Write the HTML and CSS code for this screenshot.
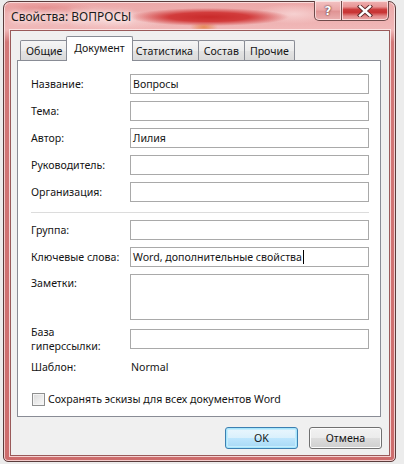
FILE: index.html
```html
<!DOCTYPE html>
<html lang="ru">
<head>
<meta charset="utf-8">
<title>Свойства: ВОПРОСЫ</title>
<link rel="stylesheet" href="styles.css">
</head>
<body>
<div class="desk">
  <div class="window">
    <div class="titlebar">
      <span class="title">Свойства: ВОПРОСЫ</span>
      <div class="caption-btns">
        <div class="cbtn help">?</div>
        <div class="cbtn close">
          <svg width="16" height="12" viewBox="0 0 16 12"><path d="M3 1.5 L13 10.5 M13 1.5 L3 10.5" stroke="#5a2a2a" stroke-width="4.2" stroke-linecap="square"/><path d="M3 1.5 L13 10.5 M13 1.5 L3 10.5" stroke="#ffffff" stroke-width="2.4" stroke-linecap="square"/></svg>
        </div>
      </div>
    </div>
    <div class="client">
      <div class="tabs">
        <div class="tab">Общие</div>
        <div class="tab active">Документ</div>
        <div class="tab">Статистика</div>
        <div class="tab">Состав</div>
        <div class="tab">Прочие</div>
      </div>
      <div class="panel">
        <div class="row"><span class="lbl">Название:</span><div class="input">Вопросы</div></div>
        <div class="row"><span class="lbl">Тема:</span><div class="input"></div></div>
        <div class="row"><span class="lbl">Автор:</span><div class="input">Лилия</div></div>
        <div class="row"><span class="lbl">Руководитель:</span><div class="input"></div></div>
        <div class="row"><span class="lbl">Организация:</span><div class="input"></div></div>
        <div class="sep"></div>
        <div class="row first"><span class="lbl">Группа:</span><div class="input"></div></div>
        <div class="row"><span class="lbl">Ключевые слова:</span><div class="input">Word, дополнительные свойства<span class="caret"></span></div></div>
        <div class="row top"><span class="lbl">Заметки:</span><div class="input area"></div></div>
        <div class="row base"><span class="lbl two">База<br>гиперссылки:</span><div class="input"></div></div>
        <div class="row plain"><span class="lbl">Шаблон:</span><span class="val">Normal</span></div>
        <div class="check"><span class="box"></span><span>Сохранять эскизы для всех документов Word</span></div>
      </div>
      <div class="buttons">
        <div class="btn default">OK</div>
        <div class="btn">Отмена</div>
      </div>
    </div>
  </div>
</div>
</body>
</html>
```
FILE: styles.css
```css
html, body {
  margin: 0;
  padding: 0;
}
body {
  width: 404px;
  height: 464px;
  overflow: hidden;
  background: #ececec;
  font-family: "Noto Sans", "Open Sans", sans-serif;
  font-size: 10.6px;
  color: #151515;
}
.desk {
  padding: 1px 0 0 3px;
}
.window {
  width: 393px;
  height: 461px;
  border: 1px solid #5a3c3c;
  border-radius: 7px 7px 5px 5px;
  box-shadow: inset 0 0 0 1px rgba(255, 235, 235, 0.75);
  background:
    radial-gradient(ellipse 80px 9px at 205px 15px, #c92a2a 0%, #d23c3c 50%, rgba(220, 80, 80, 0) 100%),
    radial-gradient(ellipse 14px 5px at 200px 25px, #e68a55 0%, rgba(230, 140, 90, 0) 100%),
    radial-gradient(ellipse 60px 10px at 110px 18px, #f7d4d4 0%, rgba(247, 212, 212, 0) 100%),
    radial-gradient(ellipse 40px 10px at 290px 12px, #f6d0d0 0%, rgba(246, 208, 208, 0) 100%),
    radial-gradient(ellipse 50px 6px at 40px 6px, #e48e8e 0%, rgba(228, 142, 142, 0) 100%),
    linear-gradient(to bottom, #eca8a8 0px, #f0b8b8 28px, #d27878 40px, #cd6c6c 100%);
  display: flex;
  flex-direction: column;
  padding: 0 5px 6px 6px;
  box-sizing: border-box;
}
.titlebar {
  height: 28px;
  display: flex;
  align-items: flex-start;
  justify-content: space-between;
  flex-shrink: 0;
}
.title {
  margin-top: 6px;
  margin-left: 1px;
  font-size: 12px;
  color: #1a1a1a;
  text-shadow: 0 0 4px #fbe8e8, 0 0 6px #fbe8e8, 0 0 8px #fbe8e8;
}
.caption-btns {
  display: flex;
  margin-right: 1px;
  margin-top: -1px;
}
.cbtn {
  height: 20px;
  box-sizing: border-box;
  border: 1px solid #6e4a4a;
  border-top: none;
  box-shadow: inset 0 0 0 1px rgba(255, 240, 240, 0.7);
  display: flex;
  align-items: center;
  justify-content: center;
}
.help {
  width: 28px;
  border-radius: 0 0 0 5px;
  background: linear-gradient(to bottom, #f2c2c2 0%, #eba8a8 45%, #e09494 55%, #eab0b0 100%);
  font-family: "DejaVu Sans", sans-serif;
  font-weight: bold;
  font-size: 12px;
  color: #fff;
  text-shadow: 0 0 1px #5a2a2a, 0 0 2px #5a2a2a;
}
.close {
  width: 47px;
  border-left: none;
  border-radius: 0 0 5px 0;
  background: linear-gradient(to bottom, #eeb2b2 0%, #e89595 30%, #cc3c3c 45%, #c83232 60%, #e38a8a 80%, #eba8a8 100%);
}
.client {
  flex: 1;
  background: #f0f0f0;
  border: 1px solid #9a5a5a;
  box-shadow: 0 0 0 1px rgba(255, 236, 236, 0.8);
  padding: 5px 8px 6px 6px;
  display: flex;
  flex-direction: column;
}
.tabs {
  display: flex;
  align-items: flex-end;
  padding-left: 3px;
  height: 24px;
  position: relative;
  z-index: 1;
}
.tab {
  height: 20px;
  box-sizing: border-box;
  padding: 0 5px;
  border: 1px solid #898c95;
  border-bottom: none;
  margin-left: -1px;
  background: linear-gradient(to bottom, #f5f5f5 0%, #ececec 50%, #e3e3e3 55%, #dadada 100%);
  display: flex;
  align-items: center;
  border-radius: 2px 2px 0 0;
}
.tab:first-child {
  margin-left: 0;
}
.tab.active {
  height: 25px;
  margin: 0 -2px -1px -2px;
  padding: 0 7px 3px 7px;
  background: #ffffff;
  position: relative;
  z-index: 2;
}
.panel {
  background: #fff;
  border: 1px solid #898c95;
  margin-right: 0;
  padding: 13px 11px 0 13px;
  height: 357px;
  box-sizing: border-box;
  display: flex;
  flex-direction: column;
}
.row {
  display: flex;
  align-items: center;
  height: 20px;
  margin-bottom: 7px;
}
.lbl {
  width: 99px;
  flex-shrink: 0;
}
.input {
  width: 239px;
  height: 20px;
  box-sizing: border-box;
  border: 1px solid #a9a9a9;
  background: #fff;
  padding-left: 2px;
  display: flex;
  align-items: center;
}
.caret {
  display: inline-block;
  width: 1px;
  height: 14px;
  background: #000;
  margin-left: 1px;
}
.sep {
  height: 1px;
  background: #dcdcdc;
  margin: 3px 0 7px 0;
}
.row.top {
  align-items: flex-start;
  height: 46px;
  margin-bottom: 9px;
}
.row.top .lbl {
  padding-top: 2px;
}
.input.area {
  height: 46px;
}
.two {
  line-height: 14px;
}
.row.base {
  margin-bottom: 10px;
}
.row.plain {
  height: 16px;
  margin-bottom: 0;
}
.val {
  padding-left: 1px;
}
.check {
  display: flex;
  align-items: center;
  margin-top: 17px;
  padding-left: 1px;
}
.box {
  width: 13px;
  height: 13px;
  box-sizing: border-box;
  border: 1px solid #8e8f8f;
  background: linear-gradient(135deg, #d9d9d9 0%, #ededed 60%, #f8f8f8 100%);
  box-shadow: inset 0 0 0 1px #f4f4f4;
  margin-right: 3px;
}
.buttons {
  display: flex;
  justify-content: flex-end;
  margin-top: 10px;
  margin-right: -1px;
  gap: 11px;
}
.btn {
  width: 73px;
  height: 22px;
  box-sizing: border-box;
  border: 1px solid #707070;
  border-radius: 3px;
  background: linear-gradient(to bottom, #f2f2f2 0%, #ebebeb 50%, #dddddd 50%, #cfcfcf 100%);
  box-shadow: inset 0 0 0 1px #fcfcfc;
  display: flex;
  align-items: center;
  justify-content: center;
}
.btn.default {
  border-color: #3c7fb1;
  background: linear-gradient(to bottom, #eaf6fd 0%, #d9f0fc 50%, #bee6fd 50%, #a7d9f5 100%);
  box-shadow: inset 0 0 0 1px #48d4fb40, inset 0 0 0 2px #c6ecfc;
}
```
